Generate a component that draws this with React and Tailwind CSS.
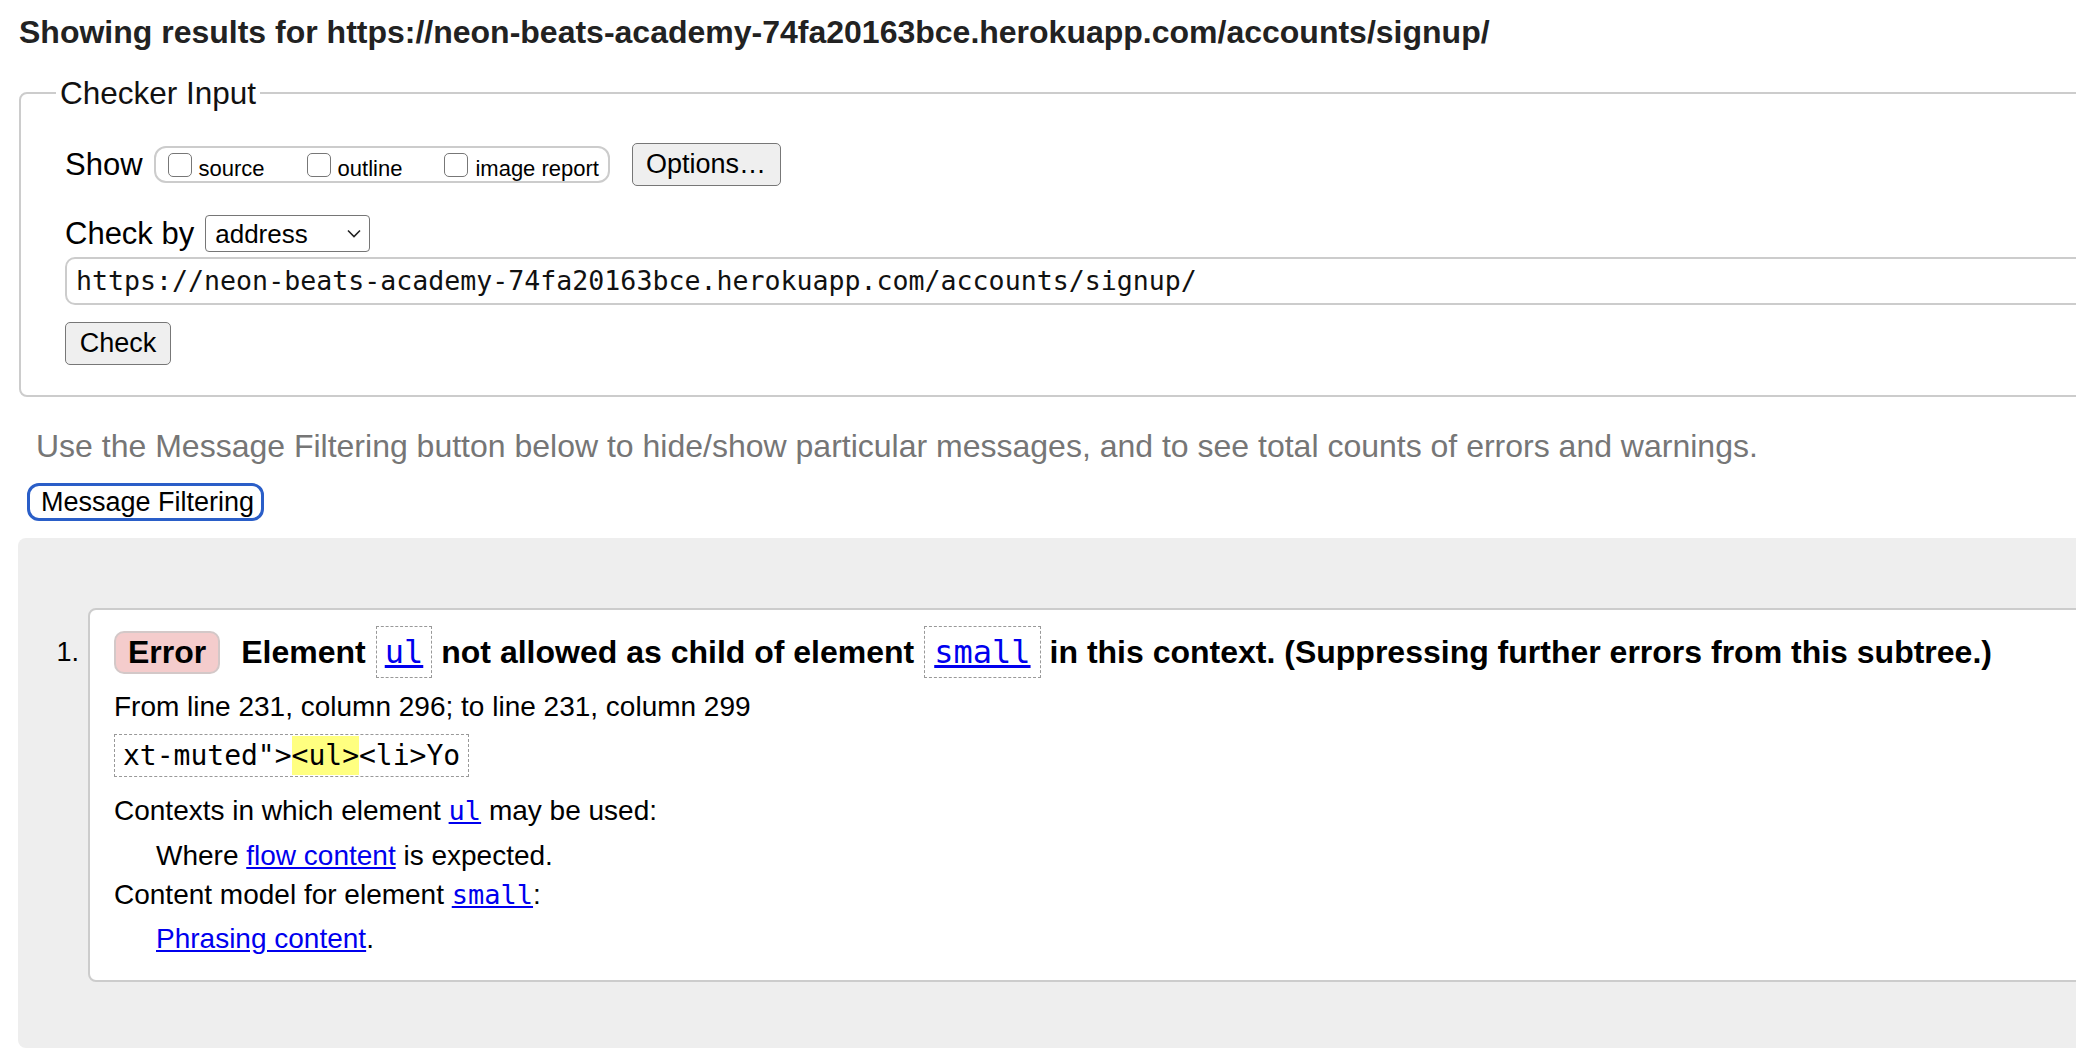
const url = "https://neon-beats-academy-74fa20163bce.herokuapp.com/accounts/signup/";

const Code = ({ children, className = "" }) => (
  <code className={`font-['DejaVu_Sans_Mono',monospace] ${className}`}>{children}</code>
);

const Box = ({ label }) => (
  <span className="inline-flex items-center gap-[7px]">
    <span className="w-[24px] h-[24px] rounded-[5px] border-[1.5px] border-[#777] bg-white" />
    <span className="text-[22px] leading-none pt-[8px]">{label}</span>
  </span>
);

const ElLink = ({ children, size = "text-[27px]" }) => (
  <a href="#" className={`text-[#0000ee] underline ${size}`}>
    <Code>{children}</Code>
  </a>
);

export default function App() {
  return (
    <div className="w-[2076px] h-[1062px] overflow-hidden bg-white text-black font-['Liberation_Sans',Arial,sans-serif]">
      <h2 className="pl-[19px] pt-[14px] text-[32px] font-bold leading-[36px] text-[#222] whitespace-nowrap">
        Showing results for {url}
      </h2>

      <fieldset className="ml-[19px] mt-[25px] w-[2200px] border-2 border-[#ccc] rounded-[8px] pl-[35px] pb-[30px]">
        <legend className="px-[4px] text-[31.5px] leading-[36px] text-[#111]">Checker Input</legend>

        <div className="pl-[9px] pt-[32px] flex items-center">
          <span className="text-[31px] leading-none">Show</span>
          <div className="ml-[11px] h-[37px] w-[456px] border-2 border-[#ccc] rounded-[12px] flex items-center pl-[12px] gap-[42px]">
            <Box label="source" />
            <Box label="outline" />
            <Box label="image report" />
          </div>
          <button className="ml-[22px] h-[43px] w-[149px] border-[1.5px] border-[#777] rounded-[5px] bg-[#efefef] text-[27px] leading-none">
            Options…
          </button>
        </div>

        <div className="pl-[9px] mt-[29px] flex items-center">
          <span className="text-[31px] leading-none">Check by</span>
          <div className="ml-[11px] h-[37px] w-[165px] border-[1.5px] border-[#767676] rounded-[4px] flex items-center justify-between pl-[9px] pr-[8px]">
            <span className="text-[26px] leading-none">address</span>
            <svg width="14" height="9" viewBox="0 0 14 9" fill="none">
              <path d="M1 1.5 L7 7.5 L13 1.5" stroke="#222" strokeWidth="1.6" />
            </svg>
          </div>
        </div>

        <div className="ml-[9px] mt-[5px] h-[48px] border-2 border-[#ccc] rounded-[10px] flex items-center pl-[9px]">
          <Code className="text-[26.6px] leading-none text-[#111]">{url}</Code>
        </div>

        <button className="ml-[9px] mt-[17px] h-[43px] w-[106px] border-[1.5px] border-[#777] rounded-[5px] bg-[#efefef] text-[27px] leading-none">
          Check
        </button>
      </fieldset>

      <p className="pl-[36px] mt-[31px] text-[32px] leading-[36px] text-[#767676] whitespace-nowrap">
        Use the Message Filtering button below to hide/show particular messages, and to see total counts of errors and warnings.
      </p>

      <button className="ml-[27px] mt-[19px] h-[38px] w-[237px] border-[3px] border-[#2a5ec8] rounded-[12px] bg-white text-[27px] leading-none text-left pl-[11px]">
        Message Filtering
      </button>

      <div className="ml-[18px] mt-[17px] w-[2200px] h-[510px] bg-[#eeeeee] rounded-[8px] pt-[70px] flex">
        <span className="w-[70px] text-right pr-[9px] pt-[31px] text-[27px] leading-none shrink-0">1.</span>
        <div className="w-[2100px] h-[374px] bg-white border-2 border-[#ccc] rounded-[8px] pl-[24px] pt-[16px]">
          <div className="flex items-center whitespace-nowrap text-[32px] font-bold">
            <span className="h-[43px] px-[12px] flex items-center bg-[#f4cccc] border-2 border-[#d3c8c8] rounded-[10px] leading-none">
              Error
            </span>
            <span className="ml-[21px] leading-none">Element</span>
            <span className="ml-[10px] mr-[9px] h-[52px] px-[8px] flex items-center border-[1.5px] border-dashed border-[#999] font-normal">
              <ElLink size="text-[32px]">ul</ElLink>
            </span>
            <span className="leading-none">not allowed as child of element</span>
            <span className="ml-[10px] mr-[9px] h-[52px] px-[9px] flex items-center border-[1.5px] border-dashed border-[#999] font-normal">
              <ElLink size="text-[32px]">small</ElLink>
            </span>
            <span className="leading-none">in this context. (Suppressing further errors from this subtree.)</span>
          </div>

          <p className="mt-[12px] text-[28px] leading-[34px]">From line 231, column 296; to line 231, column 299</p>

          <div className="mt-[10px] inline-flex items-center h-[43px] px-[8px] border-[1.5px] border-dashed border-[#999]">
            <Code className="text-[28px] leading-none">
              xt-muted"&gt;<span className="bg-[#ffff80] py-[3px]">&lt;ul&gt;</span>&lt;li&gt;Yo
            </Code>
          </div>

          <p className="mt-[17px] text-[28px] leading-[34px]">
            Contexts in which element <ElLink>ul</ElLink> may be used:
          </p>
          <p className="mt-[11px] pl-[42px] text-[28px] leading-[34px]">
            Where <a href="#" className="text-[#0000ee] underline">flow content</a> is expected.
          </p>
          <p className="mt-[5px] text-[28px] leading-[34px]">
            Content model for element <ElLink>small</ElLink>:
          </p>
          <p className="mt-[10px] pl-[42px] text-[28px] leading-[34px]">
            <a href="#" className="text-[#0000ee] underline">Phrasing content</a>.
          </p>
        </div>
      </div>
    </div>
  );
}
